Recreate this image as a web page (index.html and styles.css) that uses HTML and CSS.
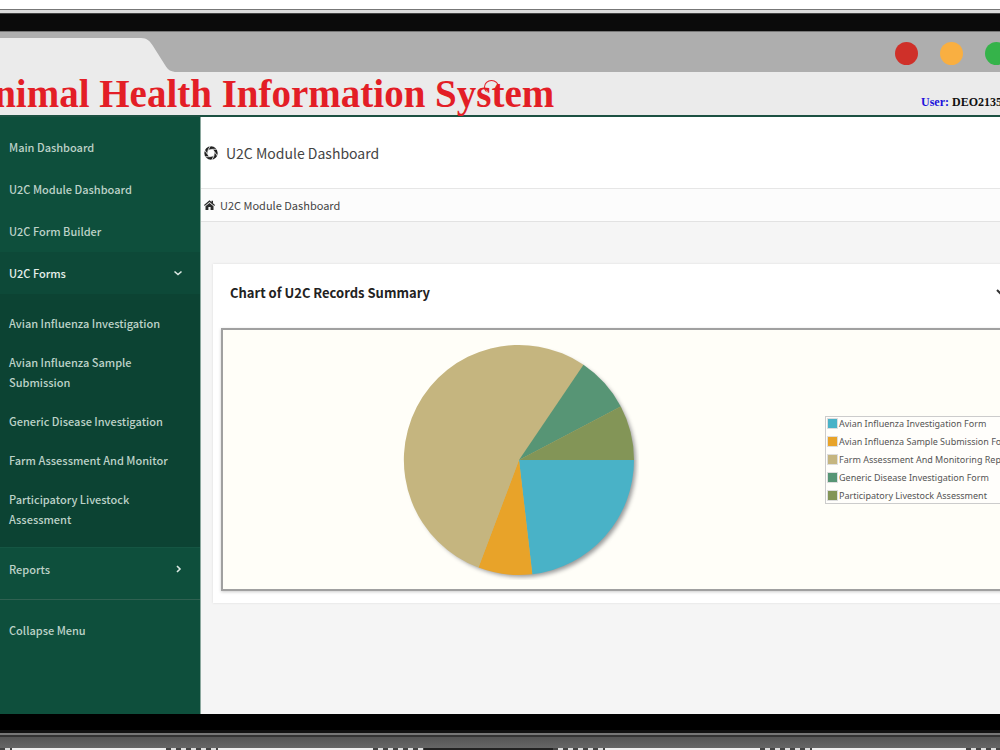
FILE: index.html
```
<!DOCTYPE html>
<html lang="en">
<head>
  <meta charset="UTF-8">
  <meta name="viewport" content="width=device-width, initial-scale=1.0">
  <title>Animal Health Information System</title>
  <link rel="stylesheet" href="styles.css">
</head>
<body>
  <div class="bezel-top"></div>

  <div class="tab-bar">
    <svg class="tab" width="180" height="34" viewBox="0 0 180 34">
      <path d="M0 0H141C147 0 150 3 153 8L165 27C168 32 171 34 177 34H0Z" fill="#ebebeb"/>
    </svg>
    <div class="lights">
      <span class="light red"></span>
      <span class="light amber"></span>
      <span class="light green"></span>
    </div>
  </div>

  <header class="site-header">
    <h1>Animal Health Information Sy<span class="ligature">st</span>em</h1>
    <p class="user"><span>User:</span> DEO2135</p>
  </header>

  <div class="screen">
    <nav class="sidebar">
      <a class="item" href="#">Main Dashboard</a>
      <a class="item" href="#">U2C Module Dashboard</a>
      <a class="item" href="#">U2C Form Builder</a>
      <a class="item open" href="#">U2C Forms
        <svg width="10" height="10" viewBox="0 0 10 10"><path d="M1.500 3.500L5 6.500L8.500 3.500"/></svg>
      </a>
      <div class="submenu">
        <a href="#">Avian Influenza Investigation</a>
        <a href="#">Avian Influenza Sample<br>Submission</a>
        <a href="#">Generic Disease Investigation</a>
        <a href="#">Farm Assessment And Monitor</a>
        <a href="#">Participatory Livestock<br>Assessment</a>
      </div>
      <a class="item reports" href="#">Reports
        <svg width="10" height="10" viewBox="0 0 10 10"><path d="M4 2L7 5L4 8"/></svg>
      </a>
      <a class="item collapse" href="#">Collapse Menu</a>
    </nav>

    <main>
      <div class="page-title">
        <svg width="14" height="14" viewBox="0 0 14 14">
          <circle cx="7" cy="7" r="5.200" fill="none" stroke="#222" stroke-width="3"/>
          <path d="M3.800 4.600L6.200 0M7.400 3.400L12.800 3.200M10.400 5.600L13.400 10M10.200 9.400L7.800 14M6.600 10.600L1.200 10.800M3.600 8.400L.6 4" stroke="#fff" stroke-width=".8"/>
        </svg>
        <h2>U2C Module Dashboard</h2>
      </div>
      <div class="breadcrumb">
        <svg width="11" height="10" viewBox="0 0 11 10">
          <path d="M0 5L5.500 .3L7.500 2V.8H9V3.300L11 5L10.300 5.900L5.500 1.900L.7 5.900Z" fill="#2b2b2b"/>
          <path d="M1.500 6.200L5.500 2.900L9.500 6.200V10H6.600V7H4.400V10H1.500Z" fill="#2b2b2b"/>
        </svg>
        <a href="#">U2C Module Dashboard</a>
      </div>

      <section class="card">
        <div class="card-head">
          <h3>Chart of U2C Records Summary</h3>
          <svg width="10" height="10" viewBox="0 0 10 10"><path d="M1 3L5 7L9 3" fill="none" stroke="#333" stroke-width="2"/></svg>
        </div>
        <div class="chart">
          <svg class="pie" width="240" height="240" viewBox="-120 -120 240 240">
            <circle class="pie-shadow" r="114"/>
            <path d="M0 0L115 0A115 115 0 0 1 13.300 114.200Z" fill="#49b2c7"/>
            <path d="M0 0L13.300 114.200A115 115 0 0 1 -40.500 107.600Z" fill="#e8a329"/>
            <path d="M0 0L-40.500 107.600A115 115 0 1 1 64.500 -95.200Z" fill="#c5b57f"/>
            <path d="M0 0L64.500 -95.200A115 115 0 0 1 101.800 -53.500Z" fill="#579575"/>
            <path d="M0 0L101.800 -53.500A115 115 0 0 1 115 0Z" fill="#839557"/>
          </svg>
          <ul class="legend">
            <li><i class="c1"></i>Avian Influenza Investigation Form</li>
            <li><i class="c2"></i>Avian Influenza Sample Submission Form</li>
            <li><i class="c3"></i>Farm Assessment And Monitoring Report</li>
            <li><i class="c4"></i>Generic Disease Investigation Form</li>
            <li><i class="c5"></i>Participatory Livestock Assessment</li>
          </ul>
        </div>
      </section>
    </main>
  </div>

  <div class="bezel-bottom"></div>
  <div class="base">
    <span class="grille first"></span>
    <span class="grille"></span>
    <span class="grille"></span>
    <span class="notch"></span>
    <span class="grille"></span>
    <span class="grille"></span>
    <span class="grille last"></span>
  </div>
</body>
</html>
```

FILE: styles.css
```
* {
  box-sizing: border-box;
}
body {
  margin: 0;
  height: 100vh;
  display: flex;
  flex-direction: column;
  overflow: hidden;
  background: #fff;
  color: #333;
  font-family: "Noto Sans CJK SC", "Open Sans", sans-serif;
  font-size: 11px;
}
h1, h2, h3, p, ul {
  margin: 0;
  padding: 0;
}
a {
  color: inherit;
  text-decoration: none;
}

/* monitor frame */
.bezel-top {
  flex: none;
  height: 32px;
  background: linear-gradient(#fff 9px, #777 9px, #777 10px, #ddd 10px, #ddd 13px, #444 13px, #444 14px, #0b0b0b 14px, #0b0b0b 31px, #777 31px);
}
.tab-bar {
  flex: none;
  height: 40px;
  display: flex;
  justify-content: space-between;
  align-items: flex-end;
  background: #aeaeae;
}
.tab {
  display: block;
}
.lights {
  display: flex;
  gap: 22px;
  margin-right: -8px;
  padding-bottom: 7px;
}
.light {
  width: 23px;
  height: 23px;
  border-radius: 50%;
}
.red { background: #cf3029; }
.amber { background: #f9af41; }
.green { background: #35b34a; }

.site-header {
  flex: none;
  height: 45px;
  display: flex;
  justify-content: space-between;
  background: #ebebeb;
  border-bottom: 2px solid #1c5142;
  font-family: "Liberation Serif", serif;
  white-space: nowrap;
}
.site-header h1 {
  margin-left: -34px;
  color: #e31e26;
  font-size: 39px;
  line-height: 43px;
}
/* arc that joins the s and the t */
.ligature {
  position: relative;
}
.ligature::before {
  content: "";
  position: absolute;
  left: 8px;
  top: 8px;
  width: 13px;
  height: 12px;
  border: 1px solid #e31e26;
  border-bottom-color: transparent;
  border-radius: 50%;
}
.user {
  margin-right: -2px;
  padding-top: 22px;
  color: #111;
  font-size: 12px;
  font-weight: bold;
  line-height: 16px;
}
.user span {
  color: #1c12dc;
}

.screen {
  flex: 1;
  min-height: 0;
  display: flex;
}

/* sidebar */
.sidebar {
  flex: none;
  width: 201px;
  padding-top: 9px;
  background: #0e4f3c;
  border-right: 1px solid #8aa79d;
  color: #bdd2c8;
  font-weight: 500;
  line-height: 20px;
}
.item {
  display: flex;
  justify-content: space-between;
  padding: 11px 17px 11px 9px;
}
.item svg {
  margin-top: 5px;
  fill: none;
  stroke: #dce9e3;
  stroke-width: 1.6;
}
.open {
  background: #0d4938;
  color: #e6f0eb;
}
.submenu {
  padding: 10px 17px 8px 9px;
  background: #0c4333;
}
.submenu a {
  display: block;
  padding: 9px 0 10px;
}
.reports {
  padding-bottom: 20px;
  border-top: 1px solid #155643;
  border-bottom: 1px solid #2f6151;
}
.collapse {
  padding-top: 20px;
}

/* content */
main {
  flex: 1;
  min-width: 0;
  overflow: hidden;
  background: #f5f5f5;
}
.page-title {
  display: flex;
  align-items: center;
  gap: 8px;
  height: 71px;
  padding-left: 3px;
  background: #fff;
}
.page-title h2 {
  font-size: 14px;
  font-weight: normal;
  color: #444;
}
.breadcrumb {
  display: flex;
  align-items: center;
  gap: 5px;
  height: 34px;
  padding-left: 3px;
  background: #fcfcfc;
  border-top: 1px solid #e6e6e6;
  border-bottom: 1px solid #e2e2e2;
  color: #444;
}
.card {
  margin: 42px -12px 0 12px;
  padding: 0 0 12px 8px;
  background: #fff;
  box-shadow: 0 0 2px #d8d8d8;
}
.card-head {
  display: flex;
  align-items: center;
  justify-content: space-between;
  height: 64px;
  padding: 0 6px 8px 9px;
}
.card-head h3 {
  font-size: 13px;
  color: #222;
}
.card-head svg {
  flex: none;
}
.chart {
  display: flex;
  align-items: center;
  justify-content: space-between;
  height: 263px;
  padding-left: 176px;
  background: #fffef8;
  border: 2px solid #a0a0a0;
  box-shadow: 0 1px 3px #ccc;
}
.pie {
  flex: none;
}
.pie-shadow {
  fill: #c5b57f;
  filter: drop-shadow(3px 3px 2px #999);
}
.legend {
  flex: none;
  width: 185px;
  display: grid;
  gap: 4px;
  border: 1px solid #ccc;
  background: #fffefb;
  list-style: none;
  font-family: "Noto Sans", sans-serif;
  font-size: 9px;
  line-height: 14px;
  color: #555;
  white-space: nowrap;
}
.legend li {
  display: flex;
  align-items: center;
  gap: 1px;
  padding-left: 1px;
}
.legend i {
  flex: none;
  width: 11px;
  height: 11px;
  border: 1px solid #ddd;
}
.c1 { background: #49b2c7; }
.c2 { background: #e8a329; }
.c3 { background: #c5b57f; }
.c4 { background: #579575; }
.c5 { background: #839557; }

/* monitor foot */
.bezel-bottom {
  flex: none;
  height: 34px;
  background: linear-gradient(#000 16px, #111 16px, #111 19px, #777 19px, #777 21px, #333 21px, #333 23px, #555 23px, #666);
}
.base {
  flex: none;
  display: flex;
  justify-content: space-between;
  height: 2px;
  background: #eee;
}
.grille {
  width: 52px;
  background: repeating-linear-gradient(90deg, #444 0, #444 5px, #ddd 5px, #ddd 10px);
}
.first {
  width: 12px;
}
.last {
  width: 34px;
}
.notch {
  width: 130px;
  margin: 0 -155px;
  background: #222;
}
```
